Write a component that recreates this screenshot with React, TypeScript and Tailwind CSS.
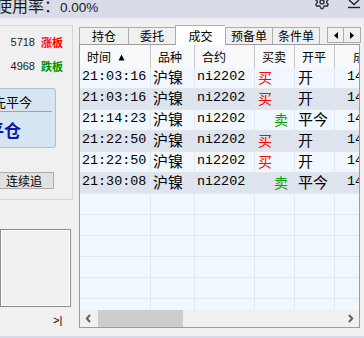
import { Settings } from "lucide-react";

const COLS = [71, 44, 60, 40, 40, 70];

const ROWS = [
  { time: "21:03:16", side: "买", oc: "开" },
  { time: "21:03:16", side: "买", oc: "开" },
  { time: "21:14:23", side: "卖", oc: "平今" },
  { time: "21:22:50", side: "买", oc: "开" },
  { time: "21:22:50", side: "买", oc: "开" },
  { time: "21:30:08", side: "卖", oc: "平今" },
];

const TABS = [
  { label: "持仓", w: "w-[49px]" },
  { label: "委托", w: "w-[47px]" },
  { label: "成交", w: "w-[50px]", active: true },
  { label: "预备单", w: "w-[47px]" },
  { label: "条件单", w: "w-[48px]" },
];

const cjk = "font-['Noto_Sans_CJK_SC',sans-serif]";
const mono = "font-['Liberation_Mono','Noto_Sans_CJK_SC',monospace]";

function Cell({ i, children, className = "" }: { i: number; children?: React.ReactNode; className?: string }) {
  return (
    <div
      className={`shrink-0 h-full flex items-center border-r border-[#e3e6ea] overflow-hidden whitespace-nowrap ${className}`}
      style={{ width: COLS[i] }}
    >
      {children}
    </div>
  );
}

function TradeTable() {
  const empty = Array.from({ length: 7 });
  return (
    <div className="w-[281px] h-[284px] border border-[#9c9c9c] bg-[#f0f7ff] flex flex-col overflow-hidden">
      {/* header */}
      <div className={`h-[23px] shrink-0 flex bg-[#f8f9fb] text-[12px] text-black ${cjk}`}>
        {["时间", "品种", "合约", "买卖", "开平", "成交价"].map((h, i) => (
          <div
            key={h}
            className={`shrink-0 h-full flex items-center border-r border-[#c4c7cc] whitespace-nowrap overflow-hidden ${
              i === 5 ? "pl-[18px]" : "pl-[7px]"
            }`}
            style={{ width: COLS[i] }}
          >
            {h}
            {i === 0 && (
              <svg className="ml-[7px] mt-[1px]" width="7" height="7" viewBox="0 0 7 7">
                <path d="M3.5 0.5 L6.5 6.5 L0.5 6.5 Z" fill="#000" />
              </svg>
            )}
          </div>
        ))}
      </div>

      {/* body */}
      <div className="flex-1 overflow-hidden">
        {ROWS.map((r, idx) => (
          <div
            key={idx}
            className={`h-[21px] flex border-b border-[#e3e6ea] ${idx % 2 === 1 ? "bg-[#dde4ed]" : "bg-[#f0f7ff]"}`}
          >
            <Cell i={0} className={`pl-[2px] pb-[2px] text-[13.4px] text-black ${mono}`}>
              {r.time}
            </Cell>
            <Cell i={1} className={`pl-[2px] pb-[2px] text-[15px] text-black ${cjk}`}>
              沪镍
            </Cell>
            <Cell i={2} className={`pl-[2px] pb-[2px] text-[13.4px] text-black ${mono}`}>
              ni2202
            </Cell>
            <Cell
              i={3}
              className={`pb-[2px] text-[14px] ${cjk} ${
                r.side === "买" ? "pl-[3px] text-[#ff0000]" : "pl-[19px] text-[#00a000]"
              }`}
            >
              {r.side}
            </Cell>
            <Cell i={4} className={`pl-[3px] pb-[2px] text-[15px] text-black ${cjk}`}>
              {r.oc}
            </Cell>
            <Cell i={5} className={`pl-[12px] pb-[2px] text-[13.4px] text-black ${mono}`}>
              146800
            </Cell>
          </div>
        ))}
        {empty.map((_, idx) => (
          <div key={`e${idx}`} className="h-[21px] flex border-b border-[#e3e6ea] bg-[#f0f7ff]">
            {COLS.map((_, i) => (
              <Cell key={i} i={i} />
            ))}
          </div>
        ))}
      </div>

      {/* horizontal scrollbar */}
      <div className="h-[17px] shrink-0 flex items-center bg-[#f0f0f0]">
        <div className="w-[17px] h-full flex items-center justify-center">
          <svg width="7" height="9" viewBox="0 0 7 9">
            <path d="M5 1 L1.8 4.5 L5 8" stroke="#606060" strokeWidth="2" fill="none" />
          </svg>
        </div>
        <div className="ml-[1px] w-[85px] h-full bg-[#cdcdcd]" />
        <div className="flex-1" />
        <div className="w-[17px] h-full flex items-center justify-center">
          <svg width="7" height="9" viewBox="0 0 7 9">
            <path d="M2 1 L5.2 4.5 L2 8" stroke="#606060" strokeWidth="2" fill="none" />
          </svg>
        </div>
      </div>
    </div>
  );
}

export default function App() {
  return (
    <div className="w-[364px] h-[338px] overflow-hidden bg-[#f0f0f0] flex flex-col select-none">
      {/* top status bar */}
      <div className="h-[18px] shrink-0 bg-[#d9dbe9] flex items-start overflow-hidden">
        <div className={`-ml-[4px] -mt-[3px] flex items-baseline leading-none text-[#1a1a1a]`}>
          <span className={`text-[16px] ${cjk}`}>使用率：</span>
          <span className="text-[13.5px] font-['Liberation_Sans',sans-serif]">0.00%</span>
        </div>
        <div className="flex-1" />
        <Settings className="-mt-[6px] w-[16px] h-[16px] text-[#333]" strokeWidth={2.2} />
        <svg className="ml-[17px] mr-[3px]" width="14" height="9" viewBox="0 0 14 9">
          <path d="M2 0 L7 4.5 L12 0" stroke="#222" strokeWidth="1.4" fill="none" />
          <path d="M1 7.5 H13" stroke="#222" strokeWidth="1.4" />
        </svg>
      </div>

      <div className="flex-1 flex min-h-0">
        {/* left panel */}
        <div className="w-[79px] shrink-0 pt-[7px] flex flex-col">
          <div className="w-[73px] h-[175px] border-t border-r border-b border-[#d6d6d6] flex flex-col">
            <div className="mt-[10px] h-[13px] flex items-center justify-end pr-[9px] gap-[6px] leading-none">
              <span className="text-[11px] text-[#1a1a1a] font-['Liberation_Sans',sans-serif]">5718</span>
              <span className={`text-[11px] font-bold text-[#ff0000] ${cjk}`}>涨板</span>
            </div>
            <div className="mt-[11px] h-[13px] flex items-center justify-end pr-[9px] gap-[6px] leading-none">
              <span className="text-[11px] text-[#1a1a1a] font-['Liberation_Sans',sans-serif]">4968</span>
              <span className={`text-[11px] font-bold text-[#009000] ${cjk}`}>跌板</span>
            </div>

            <div className="mt-[15px] -ml-[6px] w-[62px] h-[60px] border border-[#a9bfdb] rounded-r-[3px] bg-[#d7e4f2] flex flex-col overflow-hidden">
              <div className={`h-[22px] flex items-center pt-[3px] -ml-[2px] whitespace-nowrap text-[13px] text-black leading-none ${cjk}`}>
                先平今
              </div>
              <div className="h-px w-[57px] bg-[#a3a3a3]" />
              <div className={`flex-1 flex items-center -ml-[8px] whitespace-nowrap text-[17px] font-bold text-[#0a1aa8] leading-none ${cjk}`}>
                平仓
              </div>
            </div>

            <button
              className={`mt-[24px] -ml-[6px] w-[60px] h-[17px] border border-[#adadad] bg-[#e1e1e1] text-[12px] leading-none text-black flex items-center justify-center ${cjk}`}
            >
              连续追
            </button>
          </div>

          <div className="mt-[29px] w-[71px] h-[78px] border border-[#8a8a8a] shadow-[inset_1px_1px_0_#ffffff,inset_-1px_-1px_0_#ffffff]" />

          <div className="mt-[8px] ml-[53px] text-[11px] leading-none text-black font-['Liberation_Sans',sans-serif]">
            &gt;|
          </div>
        </div>

        {/* right panel */}
        <div className="w-[281px] shrink-0 pt-[7px] flex flex-col">
          <div className={`h-[19px] flex items-end text-[12px] leading-none text-black ${cjk}`}>
            {TABS.map((t) => (
              <div
                key={t.label}
                className={`${t.w} shrink-0 flex items-center justify-center border-t border-l border-[#adadad] ${
                  t.active ? "h-[20px] -mb-px bg-white relative z-10" : "h-[17px] bg-[#f0f0f0]"
                } ${t.label === "条件单" ? "border-r" : ""}`}
              >
                {t.label}
              </div>
            ))}
            <div className="ml-[7px] mb-[1px] flex">
              <div className="w-[17px] h-[16px] border border-[#adadad] bg-[#f0f0f0] flex items-center justify-center">
                <svg width="4" height="7" viewBox="0 0 4 7">
                  <path d="M4 0 L0 3.5 L4 7 Z" fill="#000" />
                </svg>
              </div>
              <div className="w-[17px] h-[16px] border border-l-0 border-[#adadad] bg-[#f0f0f0] flex items-center justify-center">
                <svg width="4" height="7" viewBox="0 0 4 7">
                  <path d="M0 0 L4 3.5 L0 7 Z" fill="#000" />
                </svg>
              </div>
            </div>
          </div>
          <TradeTable />
        </div>
      </div>

      <div className="h-[2px] shrink-0 bg-[#d9dbe9]" />
    </div>
  );
}
